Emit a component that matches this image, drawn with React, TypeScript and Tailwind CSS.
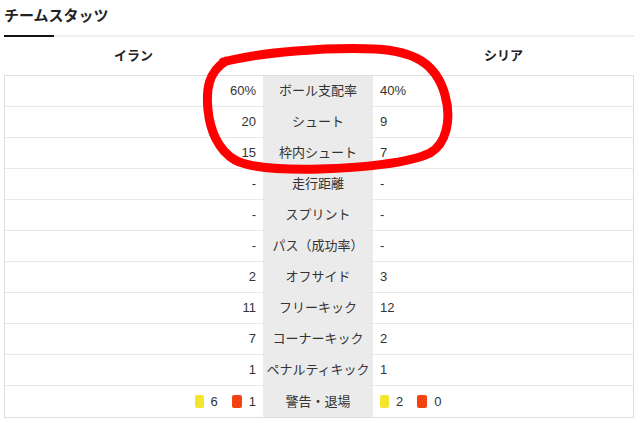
const rows: { home: React.ReactNode; label: string; away: React.ReactNode }[] = [
  { home: "60%", label: "ボール支配率", away: "40%" },
  { home: "20", label: "シュート", away: "9" },
  { home: "15", label: "枠内シュート", away: "7" },
  { home: "-", label: "走行距離", away: "-" },
  { home: "-", label: "スプリント", away: "-" },
  { home: "-", label: "パス（成功率）", away: "-" },
  { home: "2", label: "オフサイド", away: "3" },
  { home: "11", label: "フリーキック", away: "12" },
  { home: "7", label: "コーナーキック", away: "2" },
  { home: "1", label: "ペナルティキック", away: "1" },
];

function Cards({ yellow, red }: { yellow: number; red: number }) {
  return (
    <span className="inline-flex items-center">
      <span className="inline-block w-[9px] h-[13px] rounded-[2px] bg-[#f3e62c]" />
      <span className="ml-[7px]">{yellow}</span>
      <span className="ml-[14px] inline-block w-[10px] h-[13px] rounded-[2px] bg-[#f2420f]" />
      <span className="ml-[7px]">{red}</span>
    </span>
  );
}

export default function App() {
  const all = [
    ...rows,
    { home: <Cards yellow={6} red={1} />, label: "警告・退場", away: <Cards yellow={2} red={0} /> },
  ];

  return (
    <div className="relative w-[641px] h-[423px] overflow-hidden bg-white text-[#333] font-['Liberation_Sans','Noto_Sans_CJK_JP',sans-serif]">
      <div className="pl-[4px] pr-[7px] pt-[5px]">
        {/* Title */}
        <h2 className="text-[15px] leading-[22px] font-bold text-[#222]">チームスタッツ</h2>
        <div className="mt-[8px] flex h-[2px] bg-[#eeeeee]">
          <div className="w-[50px] bg-[#111]" />
        </div>

        {/* Team names */}
        <div className="grid grid-cols-[259px_110px_1fr] h-[38px] items-center text-[13px] font-bold text-[#222]">
          <div className="text-center">イラン</div>
          <div />
          <div className="text-center">シリア</div>
        </div>

        {/* Stats table */}
        <div className="border border-[#dddddd] text-[13px]">
          {all.map((r, i) => (
            <div
              key={r.label}
              className={`grid grid-cols-[258px_110px_1fr] h-[31px] ${i < all.length - 1 ? "border-b border-[#e8e8e8]" : ""}`}
            >
              <div className="flex items-center justify-end pr-[7px]">{r.home}</div>
              <div className="flex items-center justify-center bg-[#ebebeb]">{r.label}</div>
              <div className="flex items-center pl-[7px]">{r.away}</div>
            </div>
          ))}
        </div>
      </div>

      {/* hand-drawn annotation */}
      <svg className="absolute inset-0 pointer-events-none" width="641" height="423" viewBox="0 0 641 423">
        <path
          d="M 223 62 C 260 52, 330 47, 375 49 C 412 51, 436 62, 445 95 C 452 120, 446 144, 430 153 C 410 163, 360 168, 320 169 C 280 170, 250 168, 235 160 C 218 150, 210 130, 208 110 C 206 90, 208 72, 226 61"
          fill="none"
          stroke="#ff0000"
          strokeWidth="9"
          strokeLinecap="round"
          strokeLinejoin="round"
        />
      </svg>
    </div>
  );
}
